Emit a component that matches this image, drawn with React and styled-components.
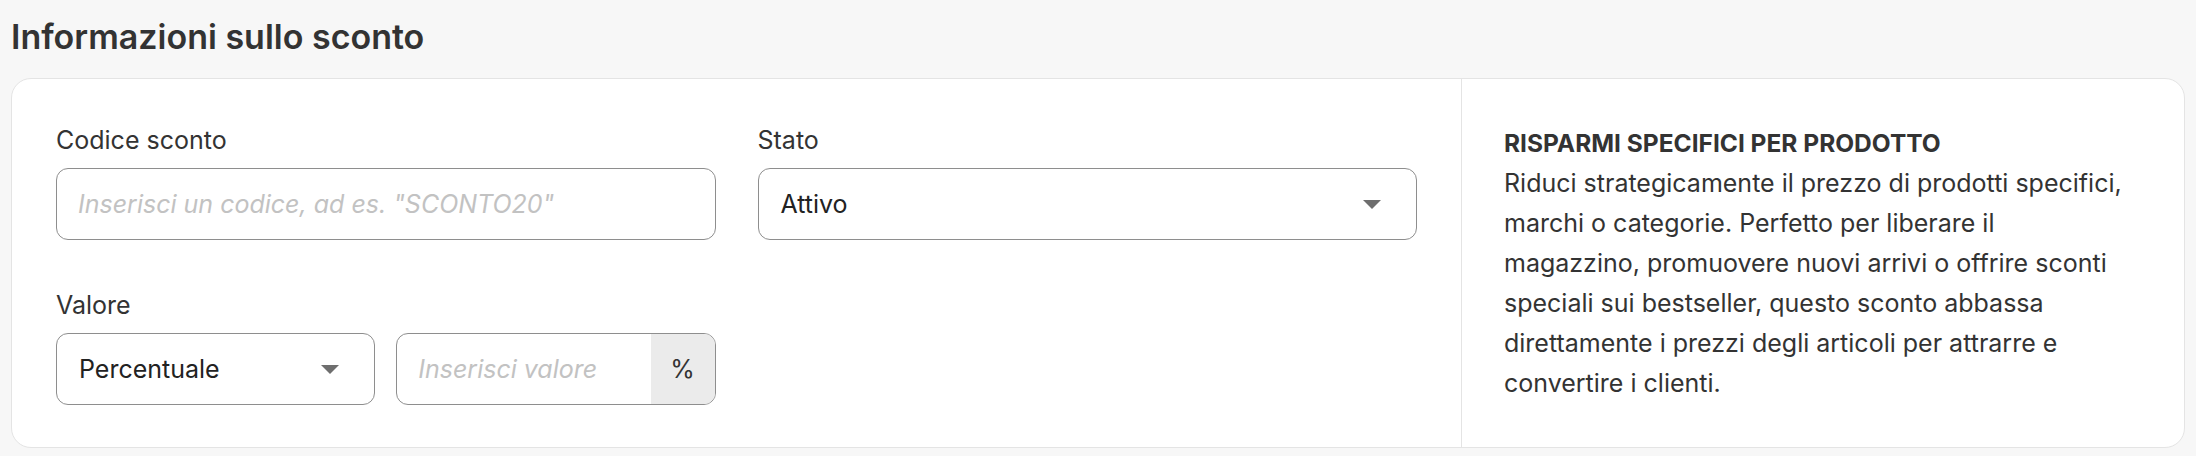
import React, { useState } from 'react';
import styled, { createGlobalStyle } from 'styled-components';

const GlobalStyle = createGlobalStyle`
  body {
    margin: 0;
    background-color: #f7f7f7;
    font-family: Inter, "Noto Sans", sans-serif;
    color: #333333;
  }
`;

const Page = styled.div`
  padding: 17px 11px 8px;
`;

const Title = styled.h2`
  margin: 0 0 21px;
  font-size: 34px;
  line-height: 40px;
  font-weight: 600;
  color: #333333;
`;

const Card = styled.div`
  display: flex;
  background-color: #ffffff;
  border: 1px solid #e4e4e4;
  border-radius: 20px;
  height: 370px;
  box-sizing: border-box;
`;

const FormPanel = styled.div`
  flex: 1;
  padding: 47px 44px 0;
  display: flex;
  flex-direction: column;
  gap: 51px;
`;

const Row = styled.div`
  display: grid;
  grid-template-columns: 1fr 1fr;
  gap: 42px;
`;

const Field = styled.div`
  display: flex;
  flex-direction: column;
  gap: 14px;
`;

const Label = styled.label`
  font-size: 25px;
  line-height: 28px;
  color: #333333;
`;

const Pair = styled.div`
  display: grid;
  grid-template-columns: 1fr 1fr;
  gap: 21px;
`;

const Box = styled.div`
  display: flex;
  align-items: center;
  height: 72px;
  box-sizing: border-box;
  border: 1px solid #8e8e8e;
  border-radius: 12px;
  background-color: #ffffff;
  overflow: hidden;
`;

const Input = styled.input`
  flex: 1;
  min-width: 0;
  height: 100%;
  border: none;
  outline: none;
  padding: 0 21px;
  font-family: Inter, "Noto Sans", sans-serif;
  font-size: 25px;
  color: #333333;
  background: transparent;

  &::placeholder {
    color: #c2c2c2;
    font-style: italic;
  }
`;

const Addon = styled.span`
  width: 64px;
  height: 100%;
  display: flex;
  align-items: center;
  justify-content: center;
  background-color: #ebebeb;
  font-size: 25px;
  color: #333333;
`;

const Select = styled(Box)`
  justify-content: space-between;
  padding: 0 35px 0 22px;
  font-size: 25px;
  color: #222222;
  cursor: pointer;
`;

const InfoPanel = styled.div`
  width: 723px;
  box-sizing: border-box;
  border-left: 1px solid #e4e4e4;
  padding: 0 30px 0 42px;
  display: flex;
  flex-direction: column;
  justify-content: center;
`;

const InfoTitle = styled.div`
  font-size: 24.5px;
  line-height: 40px;
  font-weight: 700;
  color: #333333;
`;

const InfoText = styled.p`
  margin: 0;
  font-size: 25px;
  line-height: 40px;
  color: #333333;
  white-space: nowrap;
`;

const Caret = () => (
  <svg width="18" height="9" viewBox="0 0 18 9">
    <path d="M0 0 H18 L9 9 Z" fill="#6e6e6e" />
  </svg>
);

const infoLines = [
  'Riduci strategicamente il prezzo di prodotti specifici,',
  'marchi o categorie. Perfetto per liberare il',
  'magazzino, promuovere nuovi arrivi o offrire sconti',
  'speciali sui bestseller, questo sconto abbassa',
  'direttamente i prezzi degli articoli per attrarre e',
  'convertire i clienti.',
];

function App() {
  const [code, setCode] = useState('');
  const [value, setValue] = useState('');

  return (
    <Page>
      <GlobalStyle />
      <Title>Informazioni sullo sconto</Title>
      <Card>
        <FormPanel>
          <Row>
            <Field>
              <Label>Codice sconto</Label>
              <Box>
                <Input
                  type="text"
                  value={code}
                  onChange={e => setCode(e.target.value)}
                  placeholder={'Inserisci un codice, ad es. "SCONTO20"'}
                />
              </Box>
            </Field>
            <Field>
              <Label>Stato</Label>
              <Select>
                <span>Attivo</span>
                <Caret />
              </Select>
            </Field>
          </Row>
          <Row>
            <Field>
              <Label>Valore</Label>
              <Pair>
                <Select>
                  <span>Percentuale</span>
                  <Caret />
                </Select>
                <Box>
                  <Input
                    type="text"
                    value={value}
                    onChange={e => setValue(e.target.value)}
                    placeholder="Inserisci valore"
                  />
                  <Addon>%</Addon>
                </Box>
              </Pair>
            </Field>
          </Row>
        </FormPanel>
        <InfoPanel>
          <InfoTitle>RISPARMI SPECIFICI PER PRODOTTO</InfoTitle>
          <InfoText>
            {infoLines.map((line, i) => (
              <React.Fragment key={i}>
                {line}
                {i < infoLines.length - 1 && <br />}
              </React.Fragment>
            ))}
          </InfoText>
        </InfoPanel>
      </Card>
    </Page>
  );
}

export default App;
